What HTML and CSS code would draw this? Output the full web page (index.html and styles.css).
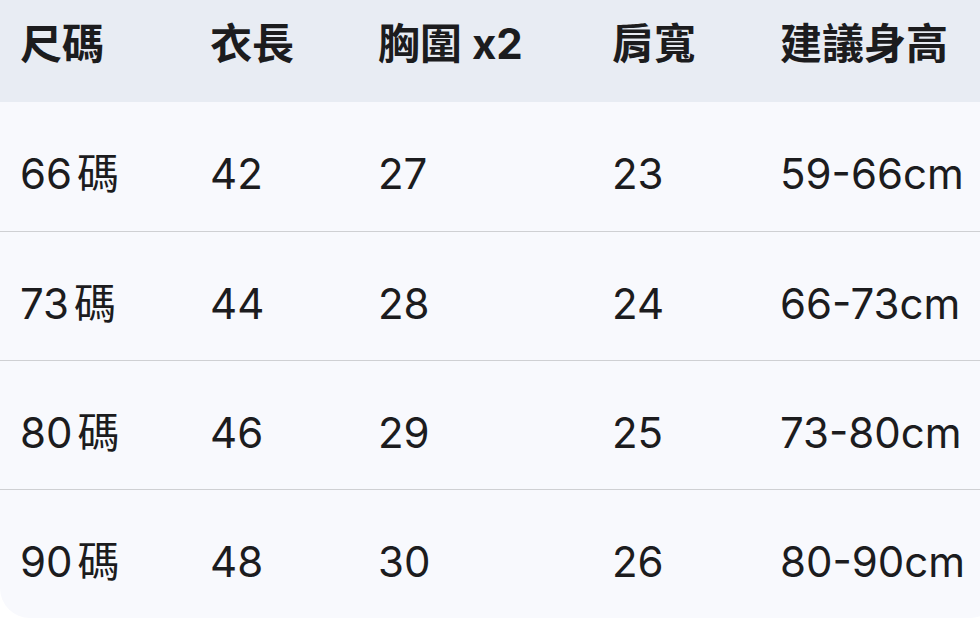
FILE: index.html
```html
<!DOCTYPE html>
<html lang="zh-Hant">
<head>
<meta charset="utf-8">
<link rel="stylesheet" href="styles.css">
</head>
<body>
<div class="table">
  <div class="row head">
    <div class="cell">尺碼</div>
    <div class="cell">衣長</div>
    <div class="cell">胸圍 x2</div>
    <div class="cell">肩寬</div>
    <div class="cell">建議身高</div>
  </div>
  <div class="row">
    <div class="cell">66<span class="unit">碼</span></div>
    <div class="cell">42</div>
    <div class="cell">27</div>
    <div class="cell">23</div>
    <div class="cell">59-66cm</div>
  </div>
  <div class="row">
    <div class="cell">73<span class="unit">碼</span></div>
    <div class="cell">44</div>
    <div class="cell">28</div>
    <div class="cell">24</div>
    <div class="cell">66-73cm</div>
  </div>
  <div class="row">
    <div class="cell">80<span class="unit">碼</span></div>
    <div class="cell">46</div>
    <div class="cell">29</div>
    <div class="cell">25</div>
    <div class="cell">73-80cm</div>
  </div>
  <div class="row last">
    <div class="cell">90<span class="unit">碼</span></div>
    <div class="cell">48</div>
    <div class="cell">30</div>
    <div class="cell">26</div>
    <div class="cell">80-90cm</div>
  </div>
</div>
</body>
</html>
```
FILE: styles.css
```css
html, body {
  margin: 0;
  padding: 0;
  background: #ffffff;
}
body {
  font-family: Inter, "Noto Sans CJK TC", sans-serif;
  color: #1c1c1e;
  width: 980px;
  overflow: hidden;
}
.table {
  width: 1000px;
  background: #f8f9fd;
  border-radius: 0 0 30px 30px;
  overflow: hidden;
}
.row {
  display: grid;
  grid-template-columns: 190px 168px 234px 168px 1fr;
  align-items: center;
  box-sizing: border-box;
  padding-left: 20px;
  padding-top: 16px;
  height: 129px;
  border-top: 1px solid #cfd0d3;
  font-size: 42px;
  white-space: nowrap;
}
.row.head {
  height: 102px;
  padding-top: 0;
  padding-bottom: 14px;
  border-top: none;
  background: #e8ecf3;
  font-weight: 700;
}
.row.head + .row {
  border-top: none;
}
.cell {
  line-height: 1.2;
}
.unit {
  margin-left: 5px;
}
```
